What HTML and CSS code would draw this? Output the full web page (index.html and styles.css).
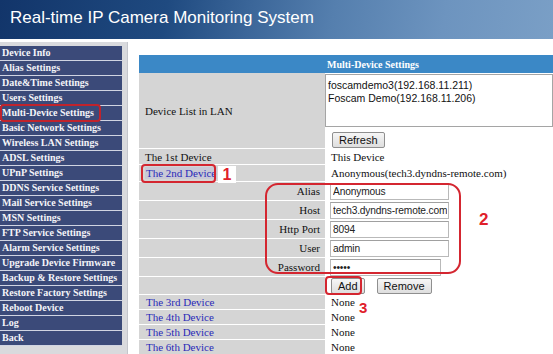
FILE: index.html
```html
<!DOCTYPE html>
<html lang="en">
<head>
    <meta charset="UTF-8">
    <title>Multi-Device Settings</title>
    <link rel="stylesheet" href="styles.css">
</head>
<body>
    <div class="banner">Real-time IP Camera Monitoring System</div>

    <div class="main">
        <div class="menu">
            <a class="menu-item">Device Info</a>
            <a class="menu-item">Alias Settings</a>
            <a class="menu-item">Date&amp;Time Settings</a>
            <a class="menu-item">Users Settings</a>
            <a class="menu-item">Multi-Device Settings</a>
            <a class="menu-item">Basic Network Settings</a>
            <a class="menu-item">Wireless LAN Settings</a>
            <a class="menu-item">ADSL Settings</a>
            <a class="menu-item">UPnP Settings</a>
            <a class="menu-item">DDNS Service Settings</a>
            <a class="menu-item">Mail Service Settings</a>
            <a class="menu-item">MSN Settings</a>
            <a class="menu-item">FTP Service Settings</a>
            <a class="menu-item">Alarm Service Settings</a>
            <a class="menu-item">Upgrade Device Firmware</a>
            <a class="menu-item">Backup &amp; Restore Settings</a>
            <a class="menu-item">Restore Factory Settings</a>
            <a class="menu-item">Reboot Device</a>
            <a class="menu-item">Log</a>
            <a class="menu-item">Back</a>
        </div>

        <div class="panel">
            <div class="row head">
                <div class="label"></div>
                <div class="value">Multi-Device Settings</div>
            </div>
            <div class="row list-row">
                <div class="label">Device List in LAN</div>
                <div class="value stack">
                    <div class="listbox">
                        <div>foscamdemo3(192.168.11.211)</div>
                        <div>Foscam Demo(192.168.11.206)</div>
                    </div>
                    <button class="btn refresh">Refresh</button>
                </div>
            </div>
            <div class="row r16">
                <div class="label">The 1st Device</div>
                <div class="value">This Device</div>
            </div>
            <div class="row r17">
                <div class="label"><a class="link active">The 2nd Device</a></div>
                <div class="value">Anonymous(tech3.dyndns-remote.com)</div>
            </div>
            <div class="row field">
                <div class="label right">Alias</div>
                <div class="value"><input class="text" type="text" value="Anonymous"></div>
            </div>
            <div class="row field">
                <div class="label right">Host</div>
                <div class="value"><input class="text" type="text" value="tech3.dyndns-remote.com"></div>
            </div>
            <div class="row field">
                <div class="label right">Http Port</div>
                <div class="value"><input class="text" type="text" value="8094"></div>
            </div>
            <div class="row field">
                <div class="label right">User</div>
                <div class="value"><input class="text" type="text" value="admin"></div>
            </div>
            <div class="row field">
                <div class="label right">Password</div>
                <div class="value"><input class="text short" type="password" value="12345"></div>
            </div>
            <div class="row r18">
                <div class="label"></div>
                <div class="value buttons">
                    <button class="btn">Add</button>
                    <button class="btn">Remove</button>
                </div>
            </div>
            <div class="row r15">
                <div class="label"><a class="link">The 3rd Device</a></div>
                <div class="value">None</div>
            </div>
            <div class="row r15">
                <div class="label"><a class="link">The 4th Device</a></div>
                <div class="value">None</div>
            </div>
            <div class="row r15">
                <div class="label"><a class="link">The 5th Device</a></div>
                <div class="value">None</div>
            </div>
            <div class="row r15">
                <div class="label"><a class="link">The 6th Device</a></div>
                <div class="value">None</div>
            </div>
        </div>
    </div>

    <!-- red callouts drawn over the screenshot -->
    <div class="mark mark-menu"></div>
    <div class="mark mark-device"></div>
    <div class="mark mark-form"></div>
    <div class="mark mark-add"></div>
    <div class="num num-1">1</div>
    <div class="num num-2">2</div>
    <div class="num num-3">3</div>
</body>
</html>
```

FILE: styles.css
```css
body {
    margin: 0;
    background: #fff;
    font-family: "Liberation Serif", "Times New Roman", serif;
    font-size: 11px;
    color: #111;
    overflow: hidden;
}

.banner {
    height: 39px;
    box-sizing: border-box;
    padding: 8px 0 0 10px;
    font-family: "Liberation Sans", Arial, sans-serif;
    font-size: 17px;
    color: #fff;
    background: linear-gradient(100deg, #12356a 0%, #1f4a80 30%, #3b6699 45%, #557fae 60%, #6d94bf 80%, #7a9fc6 100%);
}

.main {
    display: flex;
    align-items: flex-start;
}

.menu {
    width: 122px;
    margin-top: 3px;
    padding: 4px 5px 20px 0;
    background: #d9dadd;
    border-right: 1px solid #c4c6cc;
    display: flex;
    flex-direction: column;
}

.menu-item {
    height: 14px;
    line-height: 14px;
    padding-left: 2px;
    border-bottom: 1px solid #d0d4e2;
    background: #3b4a79;
    color: #f4f4f8;
    font-weight: bold;
    font-size: 10px;
    white-space: nowrap;
}

.panel {
    flex: 1;
    margin: 16px 0 0 11px;
    display: flex;
    flex-direction: column;
}

.row {
    display: flex;
    box-sizing: border-box;
    border-bottom: 1px solid #fff;
}

.row .label {
    width: 186px;
    flex: none;
    box-sizing: border-box;
    padding-left: 6px;
    background: #d5d5d5;
    display: flex;
    align-items: center;
}

.row .label.right {
    justify-content: flex-end;
    padding-right: 5px;
}

.row .value {
    flex: 1;
    padding-left: 6px;
    display: flex;
    align-items: center;
    white-space: nowrap;
}

.row.head {
    height: 18px;
    border: none;
    background: #3b88c6;
}

.row.head .label {
    background: none;
}

.row.head .value {
    padding-left: 2px;
    color: #fff;
    font-weight: bold;
    font-size: 10px;
}

.row.list-row {
    height: 76px;
}

.value.stack {
    flex-direction: column;
    align-items: flex-start;
    justify-content: flex-start;
    padding-left: 0;
}

.listbox {
    width: 100%;
    height: 53px;
    margin-top: 1px;
    box-sizing: border-box;
    padding: 4px 2px;
    border: 1px solid #a5a5a5;
    font-family: "Liberation Sans", Arial, sans-serif;
    font-size: 10.5px;
    line-height: 13px;
}

.btn {
    font-family: "Liberation Sans", Arial, sans-serif;
    font-size: 11px;
    height: 16px;
    padding: 0 6px;
    border: 1px solid #8f8f8f;
    border-radius: 2px;
    background: linear-gradient(#f6f6f6, #dedede);
    color: #111;
    line-height: 14px;
}

.btn.refresh {
    margin: 5px 0 0 7px;
}

.buttons {
    gap: 12px;
}

.r15 { height: 15px; }
.r16 { height: 16px; }
.r17 { height: 17px; }
.r18 { height: 18px; }
.field { height: 19px; }

.link {
    color: #2a2ab8;
    padding: 0 1px;
}

.link.active {
    background: #c9c9d6;
}

.text {
    width: 119px;
    height: 17px;
    box-sizing: border-box;
    margin-left: -1px;
    padding: 0 1px 0 2px;
    border: 1px solid #b9b9b9;
    border-top-color: #a0a0a0;
    font-family: "Liberation Sans", Arial, sans-serif;
    font-size: 10.2px;
    letter-spacing: -0.15px;
    color: #222;
}

.text.short {
    width: 111px;
}

.mark {
    position: absolute;
    border: 2px solid #d42630;
    border-radius: 4px;
    box-sizing: border-box;
}

.mark-menu { left: 0; top: 104px; width: 101px; height: 18px; border-color: #c0232c; }
.mark-device { left: 141px; top: 164px; width: 75px; height: 19px; }
.mark-form { left: 265px; top: 183px; width: 196px; height: 91px; border-radius: 13px; }
.mark-add { left: 325px; top: 276px; width: 37px; height: 19px; }

.num {
    position: absolute;
    font-family: "Liberation Sans", Arial, sans-serif;
    font-weight: bold;
    color: #e0202a;
    line-height: 1;
}

.num-1 { left: 218px; top: 166px; width: 18px; height: 17px; background: #fff; text-align: center; font-size: 16px; padding-top: 1px; box-sizing: border-box; }
.num-2 { left: 479px; top: 211px; font-size: 17px; }
.num-3 { left: 359px; top: 300px; font-size: 15px; }
```
